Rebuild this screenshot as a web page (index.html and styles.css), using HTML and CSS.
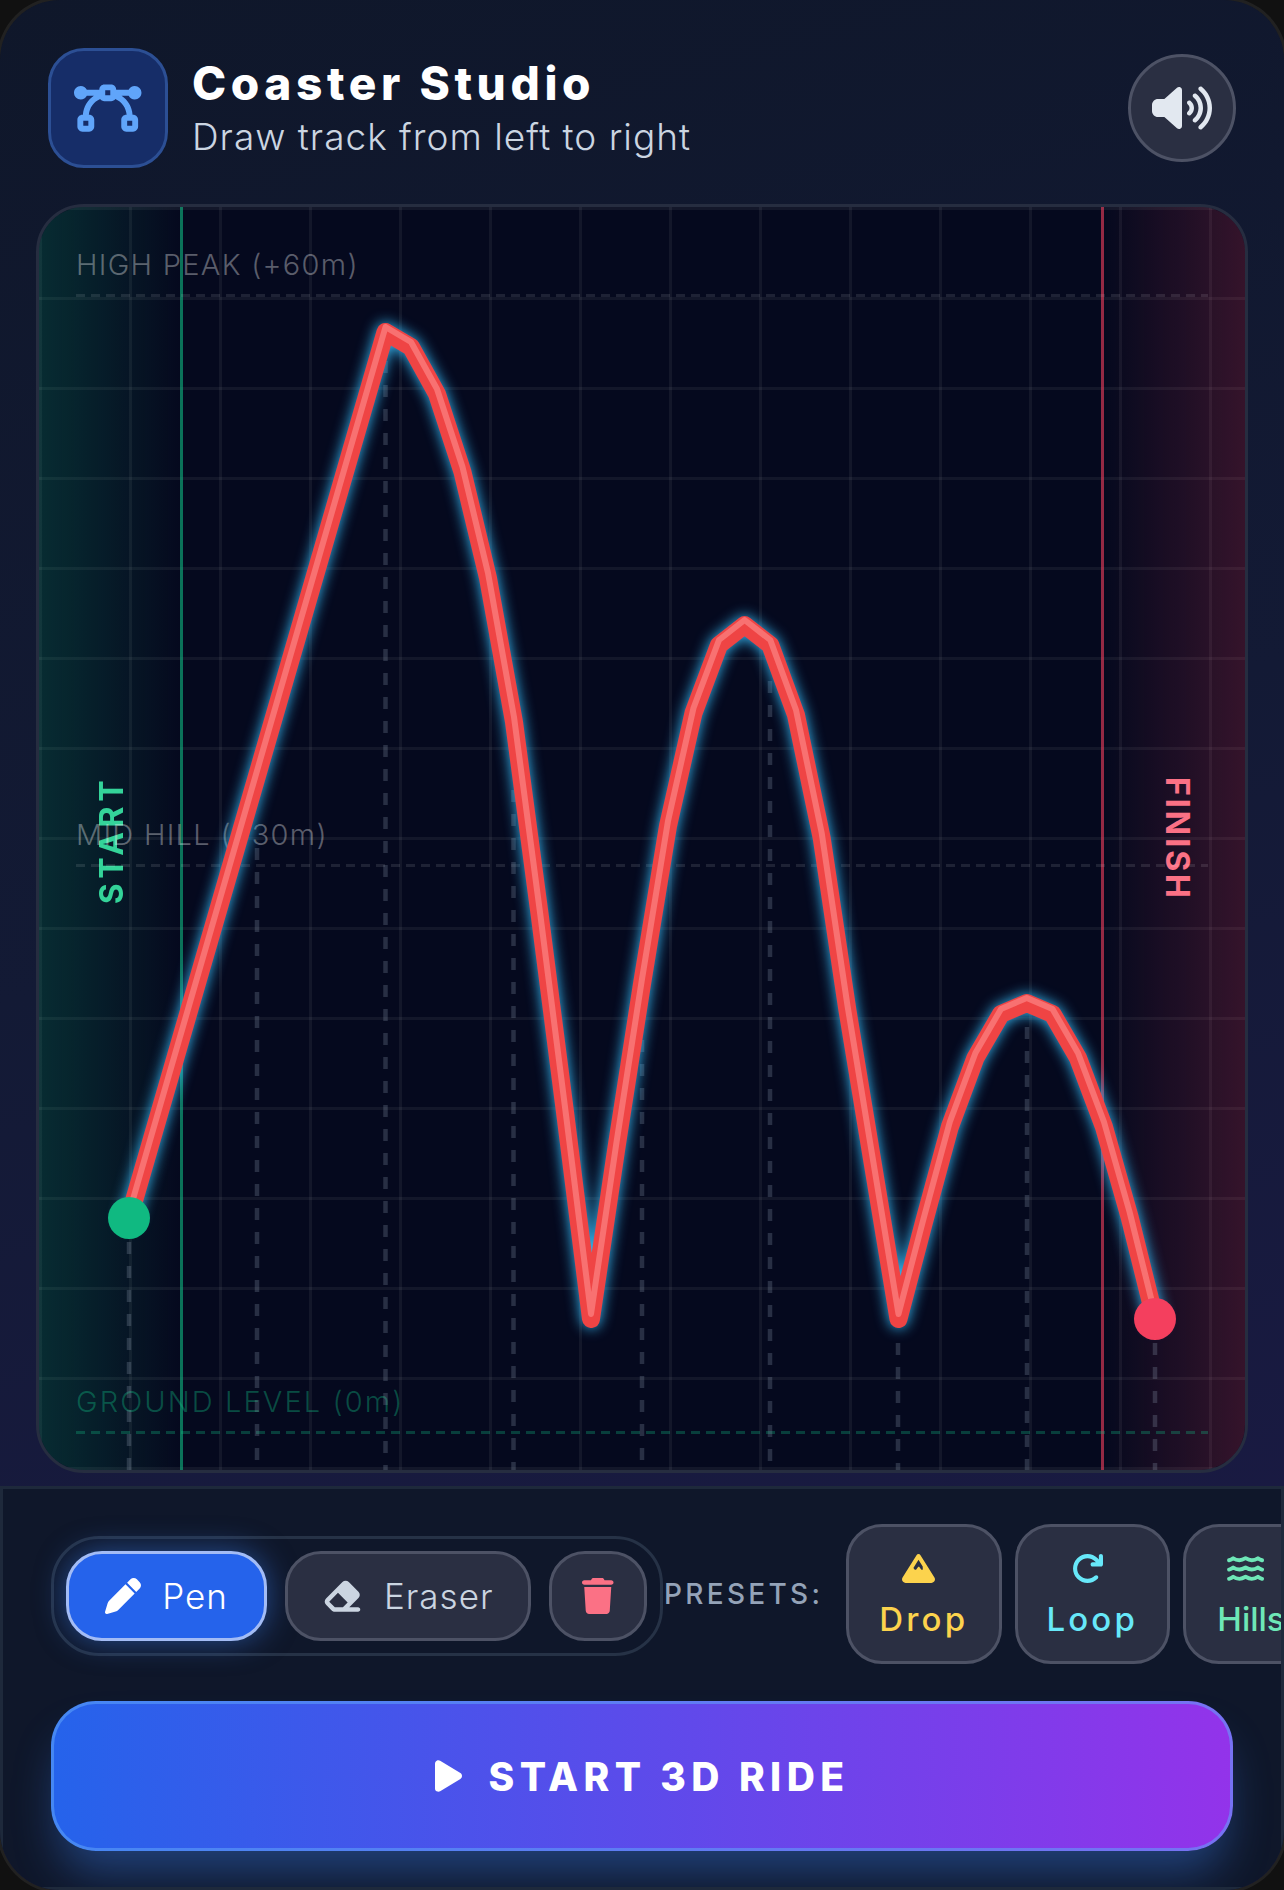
FILE: index.html
```html
<!DOCTYPE html>
<html lang="en">
<head>
    <meta charset="UTF-8">
    <meta name="viewport" content="width=device-width, initial-scale=1.0">
    <title>Coaster Studio</title>
    <link rel="stylesheet" href="styles.css">
</head>
<body>

<div class="app">
    <header class="header">
        <div class="logo">
            <svg class="logo-icon" viewBox="0 0 640 512"><path d="M296 136V88h48v48H296zM288 32c-26.5 0-48 21.5-48 48v4H121.6C111.2 62.7 89.3 48 64 48C28.7 48 0 76.7 0 112s28.7 64 64 64c25.3 0 47.2-14.7 57.6-36h66.9c-58.9 39.6-98.9 105-104 180H80c-26.5 0-48 21.5-48 48v64c0 26.5 21.5 48 48 48h64c26.5 0 48-21.5 48-48V368c0-26.5-21.5-48-48-48h-3.3c5.9-67 48.5-123.4 107.5-149.1c8.6 12.7 23.2 21.1 39.8 21.1h64c16.6 0 31.1-8.4 39.8-21.1c59 25.7 101.6 82.1 107.5 149.1H496c-26.5 0-48 21.5-48 48v64c0 26.5 21.5 48 48 48h64c26.5 0 48-21.5 48-48V368c0-26.5-21.5-48-48-48h-4.7c-5.2-75-45.1-140.4-104-180h66.9c10.4 21.3 32.3 36 57.6 36c35.3 0 64-28.7 64-64s-28.7-64-64-64c-25.3 0-47.2 14.7-57.6 36H400V80c0-26.5-21.5-48-48-48H288zM88 376h48v48H88V376zm416 48V376h48v48H504z"/></svg>
        </div>
        <div class="titles">
            <h1 class="title">Coaster Studio</h1>
            <p class="subtitle">Draw track from left to right</p>
        </div>
        <button class="sound">
            <svg class="sound-icon" viewBox="0 0 640 512"><path d="M533.6 32.5C598.5 85.2 640 165.8 640 256s-41.5 170.7-106.4 223.5c-10.3 8.4-25.4 6.8-33.8-3.5s-6.8-25.4 3.5-33.8C557.5 398.2 592 331.2 592 256s-34.5-142.2-88.7-186.3c-10.3-8.4-11.8-23.5-3.5-33.8s23.5-11.8 33.8-3.5zM473.1 107c43.2 35.2 70.9 88.9 70.9 149s-27.7 113.8-70.9 149c-10.3 8.4-25.4 6.8-33.8-3.5s-6.8-25.4 3.5-33.8C475.3 341.3 496 301.1 496 256s-20.7-85.3-53.2-111.8c-10.3-8.4-11.8-23.5-3.5-33.8s23.5-11.8 33.8-3.5zm-60.5 74.5C434.1 199.1 448 225.9 448 256s-13.9 56.9-35.4 74.5c-10.3 8.4-25.4 6.8-33.8-3.5s-6.8-25.4 3.5-33.8C393.1 284.4 400 271 400 256s-6.9-28.4-17.7-37.3c-10.3-8.4-11.8-23.5-3.5-33.8s23.5-11.8 33.8-3.5zM301.1 34.8C312.6 40 320 51.4 320 64V448c0 12.6-7.4 24-18.9 29.2s-25 3.1-34.4-5.3L131.8 352H64c-35.3 0-64-28.7-64-64V224c0-35.3 28.7-64 64-64h67.8L266.7 40.1c9.4-8.4 22.9-10.4 34.4-5.3z"/></svg>
        </button>
    </header>

    <div class="canvas">
        <div class="zone zone-start"><span class="zone-label">START</span></div>
        <div class="zone zone-finish"><span class="zone-label">FINISH</span></div>

        <div class="guide guide-high">
            <span class="guide-label">HIGH PEAK (+60m)</span>
            <div class="guide-line"></div>
        </div>
        <div class="guide guide-mid">
            <span class="guide-label">MID HILL (+30m)</span>
            <div class="guide-line"></div>
        </div>
        <div class="guide guide-ground">
            <span class="guide-label">GROUND LEVEL (0m)</span>
            <div class="guide-line"></div>
        </div>

        <svg class="track" viewBox="39 207 1206 1263">
            <g class="supports">
                <line x1="129" y1="1242" x2="129" y2="1470"/>
                <line x1="257" y1="848" x2="257" y2="1470"/>
                <line x1="385.5" y1="361" x2="385.5" y2="1470"/>
                <line x1="513.5" y1="790" x2="513.5" y2="1470"/>
                <line x1="642" y1="1040" x2="642" y2="1470"/>
                <line x1="770" y1="681" x2="770" y2="1470"/>
                <line x1="898" y1="1343" x2="898" y2="1470"/>
                <line x1="1027" y1="1027" x2="1027" y2="1470"/>
                <line x1="1155" y1="1343" x2="1155" y2="1470"/>
            </g>
            <polyline class="rail" points="129,1218 385.5,332 411,347 437,394 462.5,472 488,578 514,722 539.7,915 565,1112 591,1319 616.7,1146 642,984 668,826 693.5,713 719,645 744.6,625 770.3,645 796,715 821.7,838 847.4,1010 873,1165 898.5,1319 924,1222 949.8,1127 975.4,1058 1001,1014 1026.8,1003 1052.5,1014 1078,1058 1104,1127 1129.6,1217 1155,1319"/>
            <polyline class="rail-shine" points="129,1218 385.5,332 411,347 437,394 462.5,472 488,578 514,722 539.7,915 565,1112 591,1319 616.7,1146 642,984 668,826 693.5,713 719,645 744.6,625 770.3,645 796,715 821.7,838 847.4,1010 873,1165 898.5,1319 924,1222 949.8,1127 975.4,1058 1001,1014 1026.8,1003 1052.5,1014 1078,1058 1104,1127 1129.6,1217 1155,1319"/>
            <circle class="dot-start" cx="129" cy="1218" r="21"/>
            <circle class="dot-finish" cx="1155" cy="1319" r="21"/>
        </svg>
    </div>

    <div class="controls">
        <div class="controls-row">
            <div class="tools">
                <button class="tool tool-pen">
                    <svg class="tool-icon" viewBox="0 0 512 512"><path d="M362.7 19.3L314.3 67.7 444.3 197.7l48.4-48.4c25-25 25-65.5 0-90.5L453.3 19.3c-25-25-65.5-25-90.5 0zm-71 71L58.6 323.5c-10.4 10.4-18 23.3-22.2 37.4L1 481.2C-1.5 489.7 .8 498.8 7 505s15.3 8.5 23.7 6.1l120.3-35.4c14.1-4.2 27-11.8 37.4-22.2L421.7 220.3 291.7 90.3z"/></svg>
                    Pen
                </button>
                <button class="tool tool-eraser">
                    <svg class="tool-icon" viewBox="0 0 576 512"><path d="M290.7 57.4L57.4 290.7c-25 25-25 65.5 0 90.5l80 80c12 12 28.3 18.7 45.3 18.7H288h9.4H512c17.7 0 32-14.3 32-32s-14.3-32-32-32H387.9L518.6 285.3c25-25 25-65.5 0-90.5L381.3 57.4c-25-25-65.5-25-90.5 0zM297.4 416H288l-105.4 0-80-80L227.3 211.3 364.7 348.7 297.4 416z"/></svg>
                    Eraser
                </button>
                <button class="tool tool-trash">
                    <svg class="tool-icon" viewBox="0 0 448 512"><path d="M135.2 17.7L128 32H32C14.3 32 0 46.3 0 64S14.3 96 32 96H416c17.7 0 32-14.3 32-32s-14.3-32-32-32H320l-7.2-14.3C307.4 6.8 296.3 0 284.2 0H163.8c-12.1 0-23.2 6.8-28.6 17.7zM416 128H32L53.2 467c1.6 25.3 22.6 45 47.9 45H346.9c25.3 0 46.3-19.7 47.9-45L416 128z"/></svg>
                </button>
            </div>

            <span class="presets-label">PRESETS:</span>

            <div class="presets">
                <button class="preset preset-drop">
                    <svg class="preset-icon" viewBox="0 0 512 512"><path d="M256 32c12.5 0 24.1 6.4 30.8 17L503.4 394.4c5.6 8.9 8.6 19.2 8.6 29.7c0 30.9-25 55.9-55.9 55.9H55.9C25 480 0 455 0 424.1c0-10.5 3-20.8 8.6-29.7L225.2 49c6.6-10.6 18.3-17 30.8-17zm65 192L256 120.4 176.9 246.5l18.3 24.4c6.4 8.5 19.2 8.5 25.6 0l25.6-34.1c6.4-8.5 19.2-8.5 25.6 0l25.6 34.1c6.4 8.5 19.2 8.5 25.6 0L321 224z"/></svg>
                    Drop
                </button>
                <button class="preset preset-loop">
                    <svg class="preset-icon" viewBox="0 0 512 512"><path d="M386.3 160H336c-17.7 0-32 14.3-32 32s14.3 32 32 32H464c17.7 0 32-14.3 32-32V64c0-17.7-14.3-32-32-32s-32 14.3-32 32v51.2L414.4 97.6c-87.5-87.5-229.3-87.5-316.8 0s-87.5 229.3 0 316.8s229.3 87.5 316.8 0c12.5-12.5 12.5-32.8 0-45.3s-32.8-12.5-45.3 0c-62.5 62.5-163.8 62.5-226.3 0s-62.5-163.8 0-226.3s163.8-62.5 226.3 0L386.3 160z"/></svg>
                    Loop
                </button>
                <button class="preset preset-hills">
                    <svg class="preset-icon preset-waves" viewBox="0 0 576 512">
                        <path d="M32 128C60 122 82 108 96 96C125 118 160 128 192 128C224 128 256 115 288 96C320 115 352 128 384 128C416 128 450 118 480 96C494 108 516 122 544 128"/>
                        <path d="M32 272C60 266 82 252 96 240C125 262 160 272 192 272C224 272 256 259 288 240C320 259 352 272 384 272C416 272 450 262 480 240C494 252 516 266 544 272"/>
                        <path d="M32 416C60 410 82 396 96 384C125 406 160 416 192 416C224 416 256 403 288 384C320 403 352 416 384 416C416 416 450 406 480 384C494 396 516 410 544 416"/>
                    </svg>
                    Hills
                </button>
            </div>
        </div>

        <button class="ride">
            <svg class="ride-icon" viewBox="0 0 384 512"><path d="M73 39c-14.8-9.1-33.4-9.4-48.5-.9S0 62.6 0 80V432c0 17.4 9.4 33.4 24.5 41.9s33.7 8.1 48.5-.9L361 297c14.3-8.7 23-24.2 23-41s-8.7-32.2-23-41L73 39z"/></svg>
            START 3D RIDE
        </button>
    </div>
</div>

</body>
</html>
```

FILE: styles.css
```css
* {
    box-sizing: border-box;
}

html, body {
    height: 100%;
}

body {
    margin: 0;
    background-color: #111111;
    font-family: Inter, "Noto Sans", sans-serif;
    overflow: hidden;
}

button {
    font-family: inherit;
    cursor: pointer;
}

/* sits 3px past the window so only the corners of the ring show */
.app {
    width: 1290px;
    height: 1896px;
    margin: -3px;
    border: 3px solid rgba(255, 255, 255, 0.07);
    border-radius: 63px;
    background: linear-gradient(165deg, #0f172a 0%, #131a35 45%, #1c1a48 100%);
    background-clip: padding-box;
    overflow: hidden;
    display: flex;
    flex-direction: column;
}

.header {
    display: flex;
    align-items: center;
    gap: 24px;
    padding: 48px 48px 0;
    height: 168px;
    flex: none;
}

.logo {
    width: 120px;
    height: 120px;
    flex: none;
    display: flex;
    align-items: center;
    justify-content: center;
    background-color: #162d68;
    border: 3px solid #2c4f94;
    border-radius: 36px;
}

.logo-icon {
    width: 67.5px;
    height: 54px;
    fill: #60a5fa;
}

.titles {
    flex: 1;
}

.title {
    margin: 0;
    font-size: 46px;
    line-height: 54px;
    font-weight: 800;
    letter-spacing: 4.6px;
    color: #ffffff;
}

.subtitle {
    margin: 4px 0 0;
    font-size: 37px;
    line-height: 46px;
    font-weight: 300;
    letter-spacing: 1px;
    color: #cbd5e1;
}

.sound {
    width: 108px;
    height: 108px;
    flex: none;
    display: flex;
    align-items: center;
    justify-content: center;
    padding: 0;
    background-color: #2a2f42;
    border: 3px solid #4d5265;
    border-radius: 50%;
}

.sound-icon {
    width: 60px;
    height: 48px;
    fill: #e2e8f0;
}

.canvas {
    position: relative;
    flex: none;
    height: 1269px;
    margin: 36px 36px 0;
    border: 3px solid #262d40;
    border-radius: 48px;
    overflow: hidden;
    background-color: #05091e;
    background-image:
        linear-gradient(rgba(255, 255, 255, 0.055) 3px, transparent 3px),
        linear-gradient(90deg, rgba(255, 255, 255, 0.055) 3px, transparent 3px);
    background-size: 90px 90px;
}

.zone {
    position: absolute;
    top: 0;
    bottom: 0;
    width: 144px;
    display: flex;
    align-items: center;
    justify-content: center;
}

.zone-start {
    left: 0;
    padding: 4px 0 0 3px;
    background: linear-gradient(90deg, rgba(16, 185, 129, 0.2), transparent);
    border-right: 3px solid rgba(16, 185, 129, 0.5);
    color: #34d399;
}

.zone-finish {
    right: 0;
    padding-left: 5px;
    background: linear-gradient(270deg, rgba(244, 63, 94, 0.2), transparent);
    border-left: 3px solid rgba(244, 63, 94, 0.5);
    color: #fb7185;
}

.zone-label {
    writing-mode: vertical-rl;
    font-size: 32px;
    font-weight: 700;
    letter-spacing: 3px;
}

.zone-start .zone-label {
    letter-spacing: 4.5px;
    transform: rotate(180deg);
}

.guide {
    position: absolute;
    left: 37px;
    right: 37px;
}

.guide-high {
    top: 43px;
}

.guide-mid {
    top: 613px;
}

.guide-ground {
    top: 1180px;
}

.guide-label {
    display: block;
    font-size: 29px;
    line-height: 30px;
    font-weight: 300;
    letter-spacing: 1.3px;
    color: rgba(255, 255, 255, 0.35);
}

.guide-line {
    height: 3px;
    margin-top: 14px;
    background-image: repeating-linear-gradient(90deg, rgba(255, 255, 255, 0.1) 0 9px, transparent 9px 15px);
}

.guide-ground .guide-label {
    letter-spacing: 2.1px;
    color: rgba(16, 185, 129, 0.38);
}

.guide-ground .guide-line {
    background-image: repeating-linear-gradient(90deg, rgba(16, 185, 129, 0.3) 0 9px, transparent 9px 15px);
}

.track {
    position: absolute;
    left: 0;
    top: 0;
    width: 1206px;
    height: 1263px;
}

.supports line {
    stroke: rgba(148, 163, 184, 0.25);
    stroke-width: 4.5;
    stroke-dasharray: 12 12;
}

.rail {
    fill: none;
    stroke: #ef4444;
    stroke-width: 18;
    stroke-linejoin: round;
    stroke-linecap: round;
    filter: drop-shadow(0 0 7px #38bdf8);
}

.rail-shine {
    fill: none;
    stroke: #f87171;
    stroke-width: 6;
    stroke-linejoin: round;
    stroke-linecap: round;
    transform: translateY(-5px);
}

.dot-start {
    fill: #10b981;
}

.dot-finish {
    fill: #f43f5e;
}

.controls {
    flex: 1;
    margin-top: 13px;
    padding: 35px 48px 36px;
    background-color: #0f172a;
    border: 3px solid #1e293b;
    overflow: hidden;
}

.controls-row {
    display: flex;
    align-items: center;
    height: 140px;
}

.tools {
    flex: none;
    display: flex;
    gap: 18px;
    margin-top: 3px;
    padding: 12px 13px 12px 12px;
    border: 3px solid #263246;
    border-radius: 48px;
    background-color: rgba(15, 23, 42, 0.5);
}

.tool {
    height: 90px;
    display: flex;
    align-items: center;
    justify-content: center;
    gap: 21px;
    padding: 0;
    font-size: 35px;
    font-weight: 300;
    letter-spacing: 1px;
    border: 3px solid #4d5265;
    border-radius: 36px;
    background-color: #2a2f42;
    color: #cbd5e1;
}

.tool-icon {
    height: 36px;
    fill: currentColor;
}

.tool-pen {
    width: 201px;
    background-color: #2563eb;
    border-color: #a3bcf5;
    color: #ffffff;
    box-shadow: 0 0 30px rgba(59, 130, 246, 0.5);
}

.tool-pen .tool-icon {
    width: 36px;
}

.tool-eraser {
    width: 246px;
}

.tool-eraser .tool-icon {
    width: 40.5px;
}

.tool-trash {
    width: 98px;
    color: #fb7185;
}

.tool-trash .tool-icon {
    width: 31.5px;
}

.presets-label {
    flex: none;
    width: 156px;
    margin: 0 26px 0 1px;
    font-size: 28px;
    font-weight: 500;
    letter-spacing: 3.3px;
    white-space: nowrap;
    color: #94a3b8;
}

.presets {
    flex: none;
    display: flex;
    gap: 13px;
}

.preset {
    width: 155.5px;
    height: 140px;
    flex: none;
    display: flex;
    flex-direction: column;
    align-items: center;
    padding: 25px 0 0;
    gap: 12px;
    font-size: 33px;
    line-height: 44px;
    font-weight: 500;
    letter-spacing: 3.2px;
    border: 3px solid #4d5265;
    border-radius: 36px;
    background-color: #2a2f42;
}

.preset-icon {
    height: 33px;
    margin-right: 10px;
    fill: currentColor;
}

.preset-waves {
    fill: none;
    stroke: currentColor;
    stroke-width: 60;
    stroke-linecap: round;
    stroke-linejoin: round;
}

.preset-drop {
    color: #fcd34d;
}

.preset-loop {
    color: #67e8f9;
}

.preset-hills {
    width: 136px;
    letter-spacing: 0;
    color: #6ee7b7;
}

.ride {
    width: 100%;
    height: 150px;
    margin-top: 37px;
    display: flex;
    align-items: center;
    justify-content: center;
    gap: 27px;
    font-size: 39px;
    font-weight: 800;
    letter-spacing: 5.4px;
    color: #ffffff;
    border: 3px solid rgba(96, 165, 250, 0.55);
    border-radius: 45px;
    background: linear-gradient(90deg, #2563eb, #9333ea);
    background-origin: border-box;
    box-shadow: 0 30px 45px -9px rgba(59, 130, 246, 0.4);
}

.ride-icon {
    width: 27px;
    height: 36px;
    fill: #ffffff;
}
```
